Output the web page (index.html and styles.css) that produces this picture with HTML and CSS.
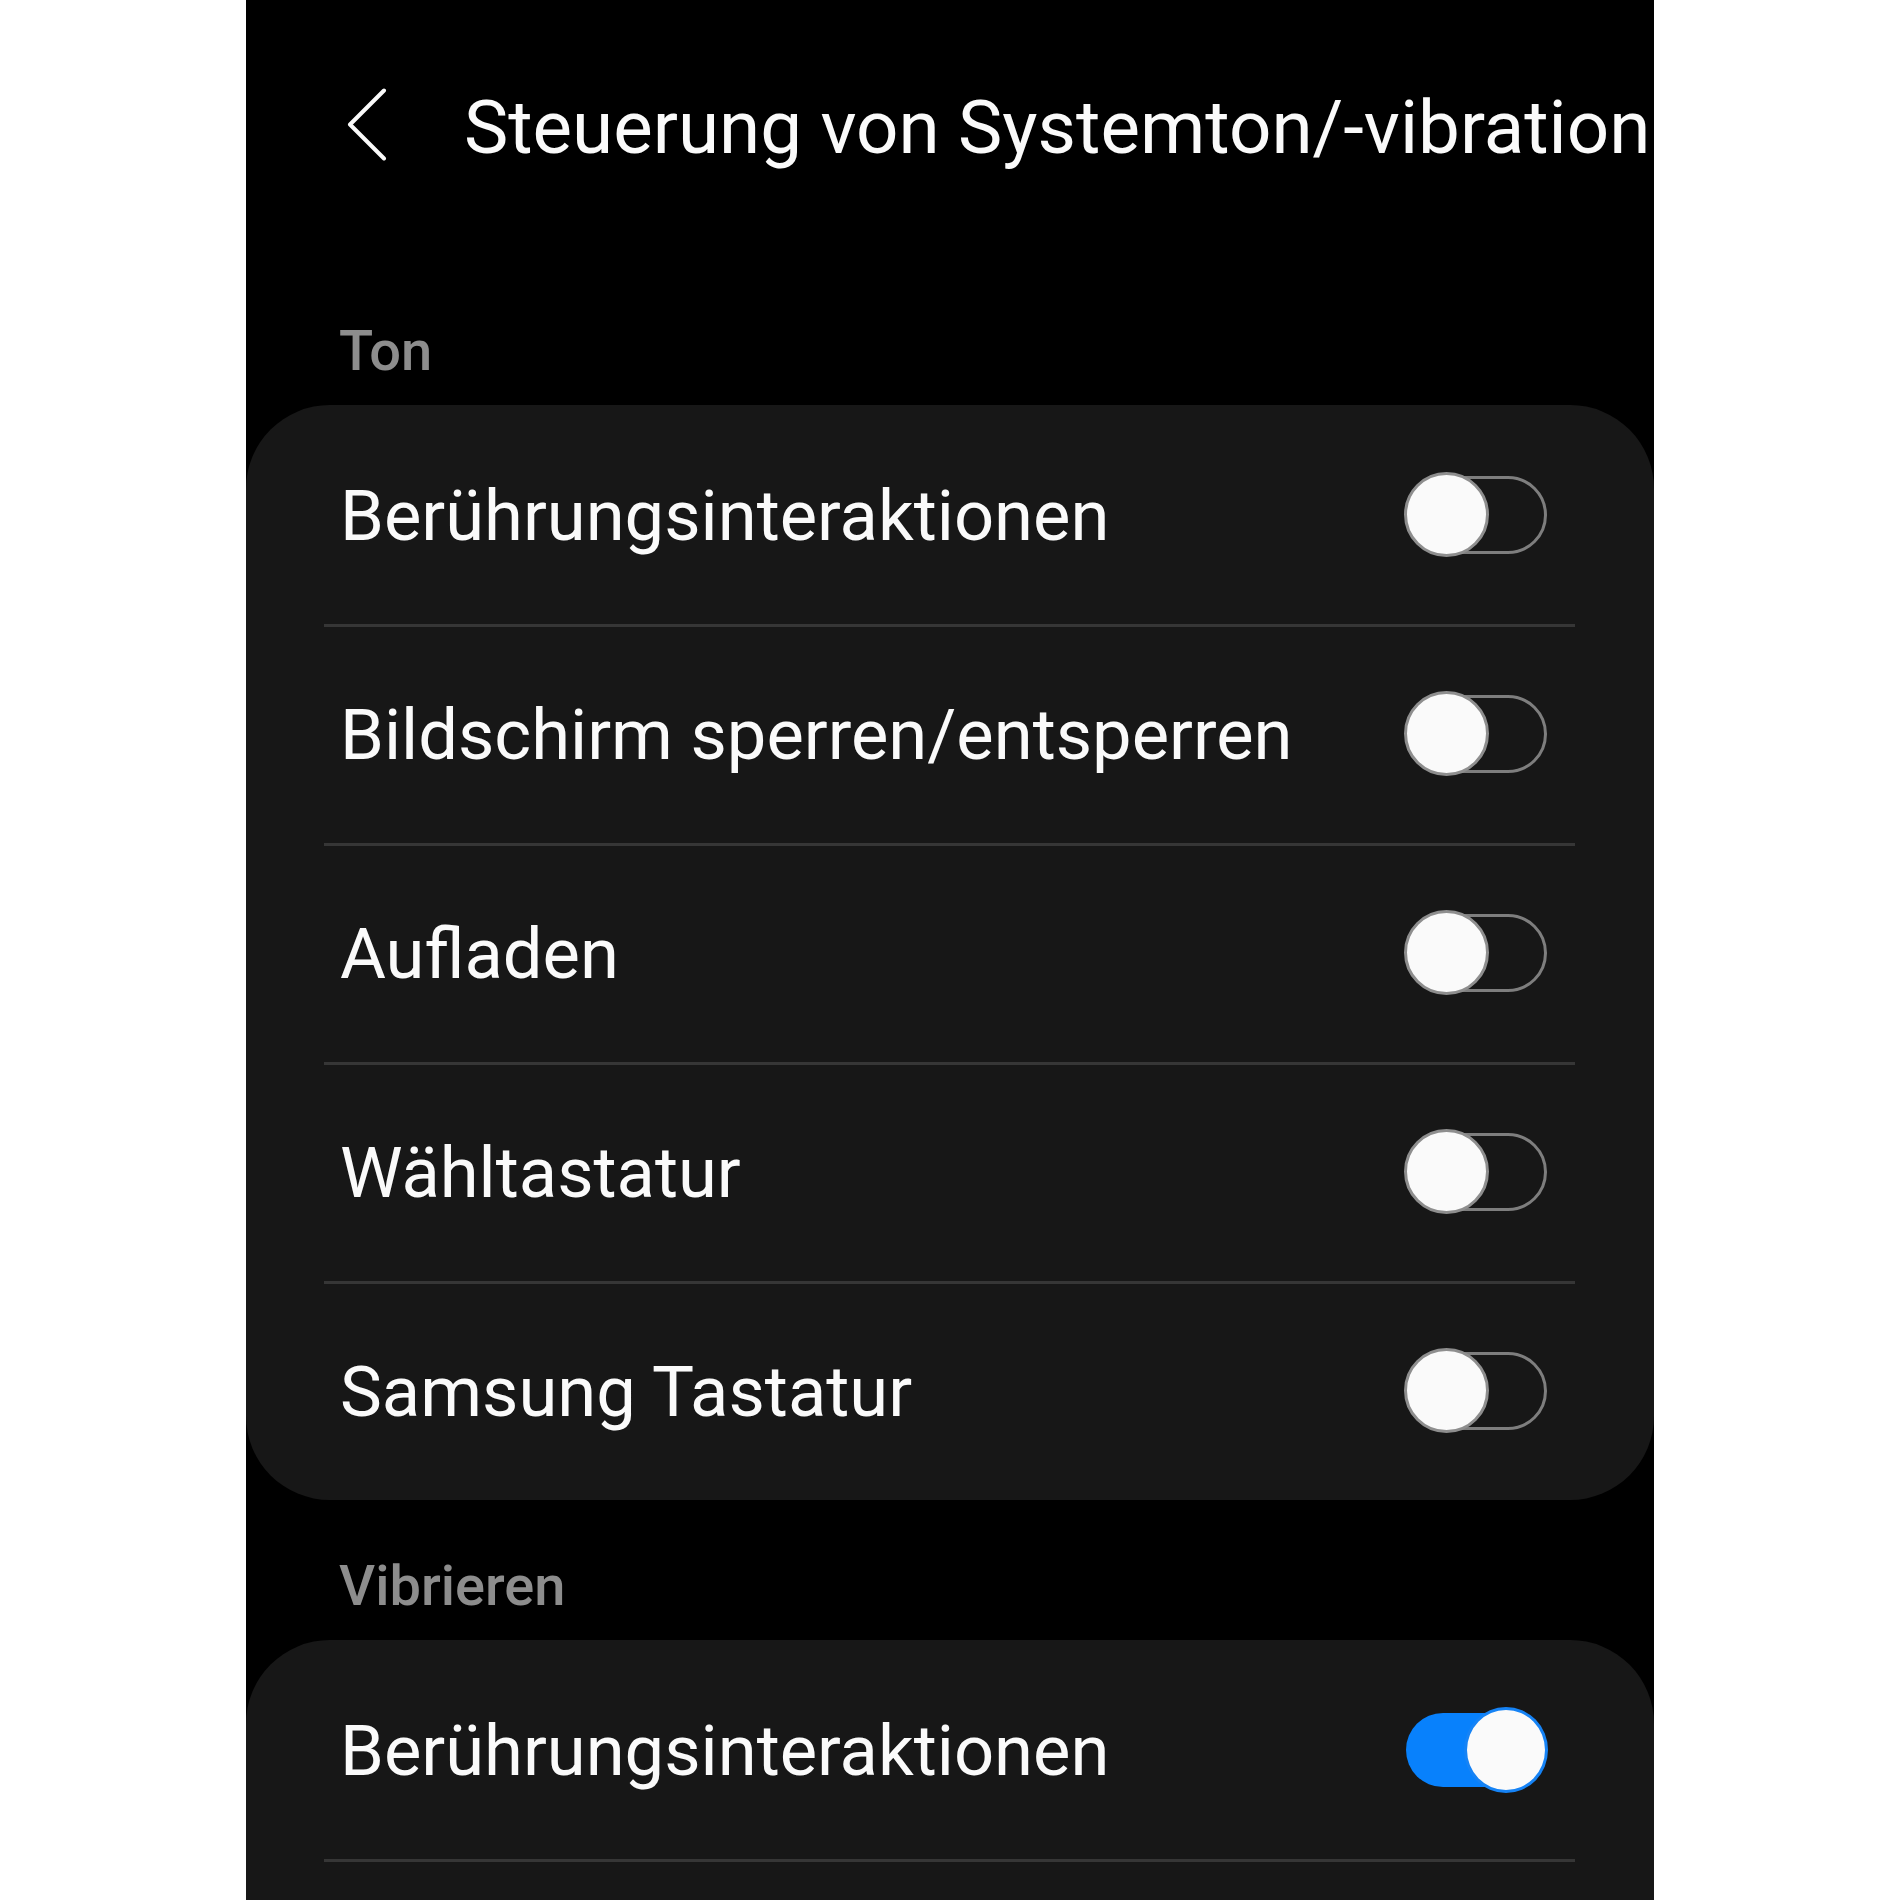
FILE: index.html
```html
<!DOCTYPE html>
<html lang="de">
<head>
<meta charset="utf-8">
<title>Steuerung von Systemton/-vibration</title>
<link rel="stylesheet" href="styles.css">
</head>
<body>
<div class="phone">
  <header class="appbar">
    <svg class="back" viewBox="0 0 40 73" width="40" height="73" aria-hidden="true">
      <polyline points="37,2.5 3,36.5 37,70.5" fill="none" stroke="#fafafa" stroke-width="4" stroke-linecap="round" stroke-linejoin="round"/>
    </svg>
    <h1 class="title">Steuerung von Systemton/-vibration</h1>
  </header>

  <div class="section-label">Ton</div>
  <div class="card">
    <div class="row"><span class="label">Berührungsinteraktionen</span><span class="switch"><span class="knob"></span></span></div>
    <div class="divider"></div>
    <div class="row"><span class="label">Bildschirm sperren/entsperren</span><span class="switch"><span class="knob"></span></span></div>
    <div class="divider"></div>
    <div class="row"><span class="label">Aufladen</span><span class="switch"><span class="knob"></span></span></div>
    <div class="divider"></div>
    <div class="row"><span class="label">Wähltastatur</span><span class="switch"><span class="knob"></span></span></div>
    <div class="divider"></div>
    <div class="row"><span class="label">Samsung Tastatur</span><span class="switch"><span class="knob"></span></span></div>
  </div>

  <div class="section-label">Vibrieren</div>
  <div class="card card-open">
    <div class="row"><span class="label">Berührungsinteraktionen</span><span class="switch on"><span class="knob"></span></span></div>
    <div class="divider"></div>
  </div>
</div>
</body>
</html>
```

FILE: styles.css
```css
html, body {
  margin: 0;
  padding: 0;
  background: #ffffff;
}

body {
  font-family: Roboto, "Noto Sans", "Liberation Sans", sans-serif;
  color: #fafafa;
}

.phone {
  margin-left: 246px;
  width: 1408px;
  height: 1900px;
  background: #000000;
  overflow: hidden;
}

.appbar {
  height: 265px;
  box-sizing: border-box;
  padding: 0 0 8px 101px;
  display: flex;
  align-items: center;
}

.back {
  flex: none;
  display: block;
  margin-right: 77px;
  margin-bottom: 8px;
}

.title {
  margin: 0;
  font-size: 74.5px;
  font-weight: 400;
  line-height: 1;
  white-space: nowrap;
  color: #fafafa;
  letter-spacing: 0;
}

.section-label {
  padding: 58px 0 26px 93px;
  font-size: 56px;
  line-height: 56px;
  font-weight: 500;
  color: #8d8d8d;
}

.card {
  background: #171717;
  border-radius: 84px;
  padding-top: 3px;
}

.card-open {
  padding-bottom: 120px;
}

.row {
  height: 216px;
  display: flex;
  align-items: center;
  justify-content: space-between;
  padding: 0 107px 0 94px;
}

.label {
  font-size: 70.5px;
  line-height: 1;
  color: #fafafa;
  white-space: nowrap;
}

.divider {
  height: 3px;
  margin: 0 79px 0 78px;
  background: #363636;
}

.switch {
  position: relative;
  flex: none;
  width: 141px;
  height: 78px;
  margin-bottom: 3px;
  box-sizing: border-box;
  border: 3px solid #7e7e7e;
  border-radius: 39px;
}

.switch .knob {
  position: absolute;
  top: 50%;
  left: -5px;
  width: 85px;
  height: 85px;
  box-sizing: border-box;
  margin-top: -42.5px;
  border-radius: 50%;
  background: #fafafa;
  border: 3px solid #8e8e8e;
}

.switch.on {
  height: 74px;
  border: none;
  background: #0881fc;
}

.switch.on .knob {
  left: auto;
  right: -1px;
  width: 84px;
  height: 86px;
  margin-top: -43px;
  border-color: #1683f5;
}
```
